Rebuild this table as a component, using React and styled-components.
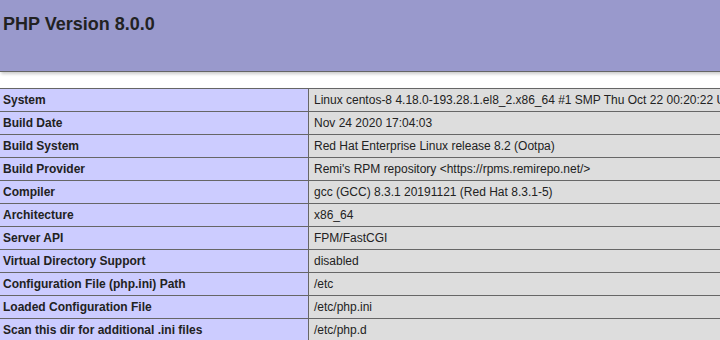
import React from 'react';
import styled, { createGlobalStyle } from 'styled-components';

const GlobalStyle = createGlobalStyle`
  html, body {
    margin: 0;
    padding: 0;
    background-color: #fff;
    overflow: hidden;
  }
  body {
    font-family: 'Liberation Sans', Arial, sans-serif;
    color: #222;
  }
`;

const Page = styled.div`
  width: 934px;
`;

const Header = styled.div`
  box-sizing: border-box;
  height: 72px;
  padding: 14px 5px 0 3px;
  background-color: #99c;
  border-bottom: 1px solid #666;
  box-shadow: 1px 2px 3px #ccc;
`;

const Title = styled.h1`
  margin: 0;
  font-size: 18px;
  font-weight: bold;
  text-align: left;
`;

const InfoTable = styled.table`
  margin-top: 16px;
  width: 934px;
  border-collapse: collapse;
  box-shadow: 1px 2px 3px #ccc;
`;

const Cell = styled.td`
  border: 1px solid #666;
  padding: 4px 5px;
  font-size: 12px;
  line-height: 14px;
  vertical-align: baseline;
  white-space: nowrap;
  text-align: left;
  background-color: ${(p) => (p.$label ? '#ccf' : '#ddd')};
  font-weight: ${(p) => (p.$label ? 'bold' : 'normal')};

  &:first-child {
    width: 300px;
    border-left: none;
    padding-left: 3px;
  }
`;

const rows = [
  ['System', 'Linux centos-8 4.18.0-193.28.1.el8_2.x86_64 #1 SMP Thu Oct 22 00:20:22 UTC 2020 x86_64'],
  ['Build Date', 'Nov 24 2020 17:04:03'],
  ['Build System', 'Red Hat Enterprise Linux release 8.2 (Ootpa)'],
  ['Build Provider', "Remi's RPM repository <https://rpms.remirepo.net/>"],
  ['Compiler', 'gcc (GCC) 8.3.1 20191121 (Red Hat 8.3.1-5)'],
  ['Architecture', 'x86_64'],
  ['Server API', 'FPM/FastCGI'],
  ['Virtual Directory Support', 'disabled'],
  ['Configuration File (php.ini) Path', '/etc'],
  ['Loaded Configuration File', '/etc/php.ini'],
  ['Scan this dir for additional .ini files', '/etc/php.d'],
];

const App = () => {
  return (
    <Page>
      <GlobalStyle />
      <Header>
        <Title>PHP Version 8.0.0</Title>
      </Header>
      <InfoTable>
        <tbody>
          {rows.map(([name, value]) => (
            <tr key={name}>
              <Cell $label>{name}</Cell>
              <Cell>{value}</Cell>
            </tr>
          ))}
        </tbody>
      </InfoTable>
    </Page>
  );
};

export default App;
